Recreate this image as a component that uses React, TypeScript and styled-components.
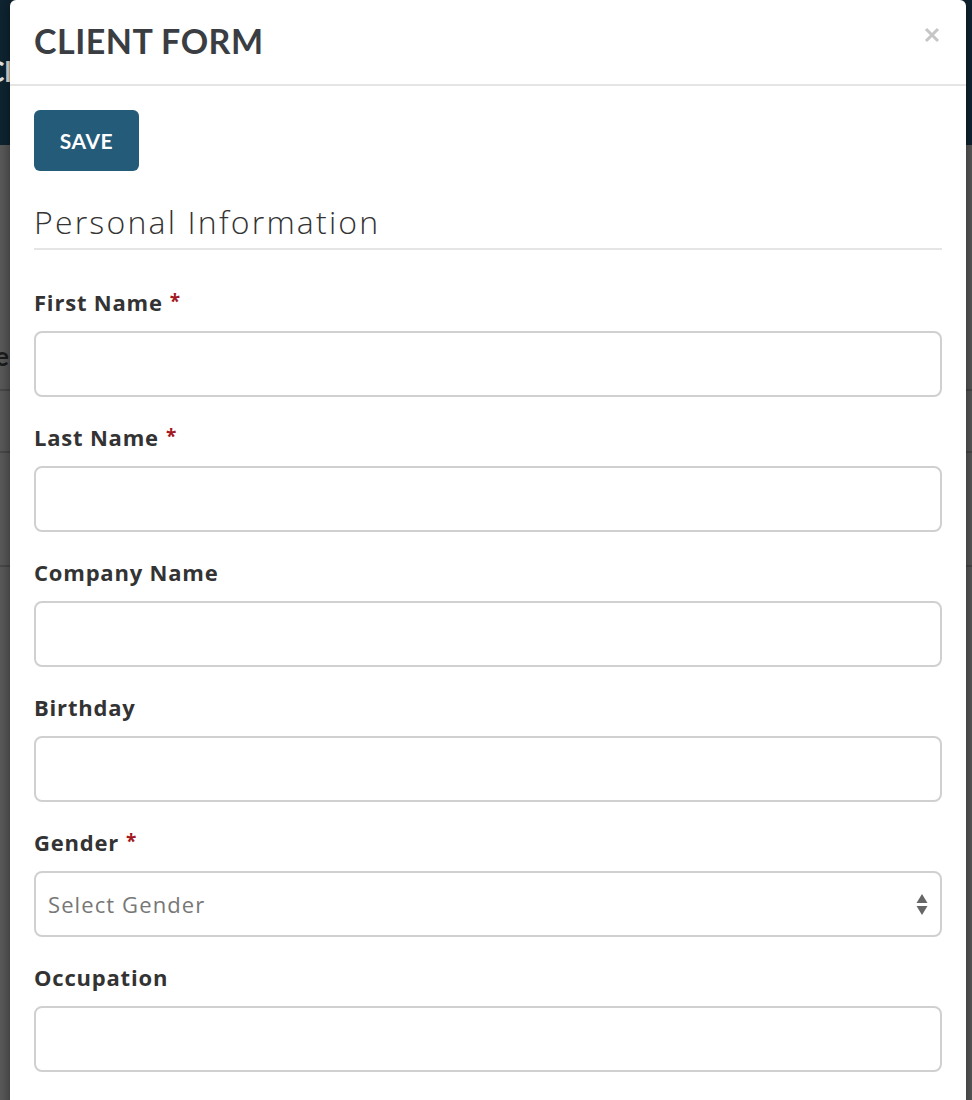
import React from "react";
import styled, { createGlobalStyle } from "styled-components";

const Global = createGlobalStyle`
  html, body { margin: 0; padding: 0; }
  body {
    width: 972px;
    height: 1100px;
    overflow: hidden;
    background: #5b5b5b;
    font-family: "Open Sans", Lato, Arial, sans-serif;
  }
`;

const Page = styled.div`
  position: relative;
  width: 972px;
  height: 1100px;
  overflow: hidden;
  background: #5b5b5b;
`;

const AppHeader = styled.div`
  height: 145px;
  background: #0f2532;
  display: flex;
  align-items: center;
`;

const AppTitle = styled.div`
  margin-left: -14px;
  margin-top: -4px;
  color: #e9e9e9;
  font-family: Lato, Arial, sans-serif;
  font-weight: 700;
  font-size: 28px;
`;

const AppRows = styled.div`
  display: flex;
  flex-direction: column;
  padding-top: 151px;
`;

const AppRow = styled.div<{ $h: number }>`
  height: ${(p) => p.$h}px;
  box-sizing: border-box;
  border-bottom: 2px solid #4a4a4a;
  display: flex;
  align-items: center;
  padding-top: 26px;
  color: #1c1c1c;
  font-family: Lato, Arial, sans-serif;
  font-weight: 700;
  font-size: 26px;
`;

const RowText = styled.div`
  width: 9px;
  display: flex;
  justify-content: flex-end;
  white-space: nowrap;
`;

const Modal = styled.div`
  position: absolute;
  top: 0;
  left: 10px;
  width: 956px;
  height: 1120px;
  background: #fff;
  border-radius: 6px 6px 0 0;
  box-shadow: 0 0 14px rgba(0, 0, 0, 0.5);
  display: flex;
  flex-direction: column;
`;

const ModalHeader = styled.div`
  height: 84px;
  border-bottom: 2px solid #e5e5e5;
  display: flex;
  align-items: center;
  justify-content: space-between;
  padding: 0 24px;
`;

const ModalTitle = styled.h1`
  margin: 0;
  font-family: Lato, Arial, sans-serif;
  font-size: 34px;
  font-weight: 700;
  color: #3a3d42;
  letter-spacing: 0.5px;
  margin-top: -4px;
`;

const Close = styled.button`
  border: 0;
  background: none;
  padding: 0;
  width: 18px;
  height: 18px;
  margin-right: 1px;
  margin-top: -14px;
  display: flex;
  align-items: center;
  justify-content: center;
  cursor: pointer;
`;

const Body = styled.div`
  padding: 24px 24px 0;
  display: flex;
  flex-direction: column;
`;

const SaveButton = styled.button`
  align-self: flex-start;
  width: 105px;
  height: 61px;
  border: 0;
  border-radius: 6px;
  background: #235b79;
  color: #fff;
  font-family: Lato, Arial, sans-serif;
  font-weight: 700;
  font-size: 21px;
  letter-spacing: 0.5px;
`;

const SectionTitle = styled.h2`
  margin: 33px 0 0;
  font-size: 32px;
  line-height: 36px;
  font-weight: 300;
  color: #333;
  letter-spacing: 2.2px;
  padding-bottom: 8px;
  border-bottom: 2px solid #e5e5e5;
`;

const Fields = styled.div`
  display: flex;
  flex-direction: column;
  gap: 27px;
  margin-top: 39px;
`;

const Field = styled.div`
  display: flex;
  flex-direction: column;
  gap: 16px;
`;

const Label = styled.label`
  font-size: 22px;
  line-height: 26px;
  font-weight: 700;
  color: #333;
  letter-spacing: 0.8px;
  display: flex;
  align-items: flex-start;
`;

const Req = styled.span`
  color: #a3191f;
  font-size: 19px;
  line-height: 18px;
  padding-top: 3px;
  margin-left: 7px;
`;

const Input = styled.div`
  height: 66px;
  box-sizing: border-box;
  border: 2px solid #d0d0d0;
  border-radius: 8px;
  display: flex;
  align-items: center;
  justify-content: space-between;
  padding: 0 12px 0 12px;
`;

const Placeholder = styled.span`
  font-size: 22px;
  color: #777;
  letter-spacing: 1.1px;
`;

const fields: { label: string; req?: boolean; select?: string }[] = [
  { label: "First Name", req: true },
  { label: "Last Name", req: true },
  { label: "Company Name" },
  { label: "Birthday" },
  { label: "Gender", req: true, select: "Select Gender" },
  { label: "Occupation" },
];

export default function App() {
  return (
    <>
      <Global />
      <Page>
        <AppHeader>
          <AppTitle>Clients</AppTitle>
        </AppHeader>
        <AppRows>
          <AppRow $h={95}>
            <RowText>Name</RowText>
          </AppRow>
          <AppRow $h={62} />
          <AppRow $h={114} />
        </AppRows>
        <Modal>
          <ModalHeader>
            <ModalTitle>CLIENT FORM</ModalTitle>
            <Close aria-label="Close">
              <svg width="16" height="16" viewBox="0 0 16 16">
                <path d="M2 2 L14 14 M14 2 L2 14" stroke="#c6c6c6" strokeWidth="3" />
              </svg>
            </Close>
          </ModalHeader>
          <Body>
            <SaveButton>SAVE</SaveButton>
            <SectionTitle>Personal Information</SectionTitle>
            <Fields>
              {fields.map((f) => (
                <Field key={f.label}>
                  <Label>
                    {f.label}
                    {f.req && <Req>*</Req>}
                  </Label>
                  <Input>
                    {f.select && (
                      <>
                        <Placeholder>{f.select}</Placeholder>
                        <svg width="12" height="24" viewBox="0 0 12 24">
                          <path d="M6 2 L11.5 11 L0.5 11 Z" fill="#666" />
                          <path d="M0.5 14 L11.5 14 L6 23 Z" fill="#666" />
                        </svg>
                      </>
                    )}
                  </Input>
                </Field>
              ))}
            </Fields>
          </Body>
        </Modal>
      </Page>
    </>
  );
}
